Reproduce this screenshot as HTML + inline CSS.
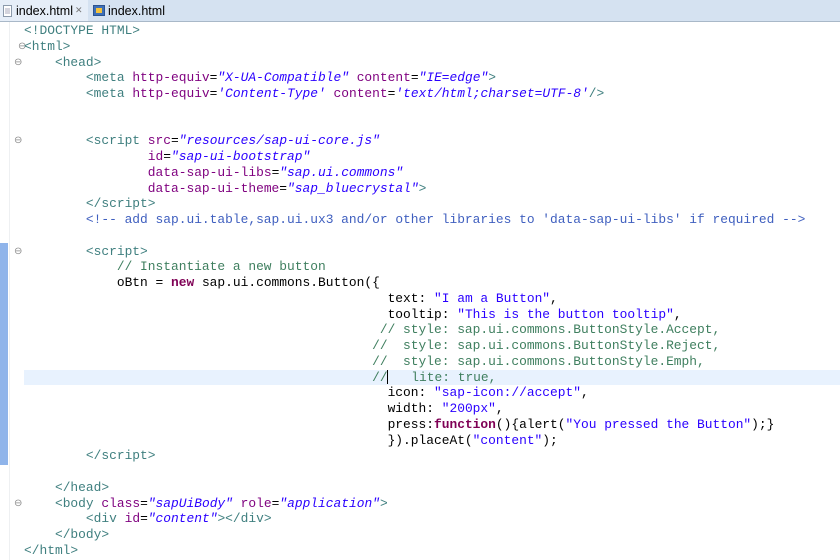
<!DOCTYPE html>
<html><head><style>
body{margin:0;width:840px;height:560px;background:#fff;position:relative;overflow:hidden;font-family:"Liberation Mono",monospace;}
.tabs{position:absolute;left:0;top:0;width:840px;height:21px;background:#d5e2f1;border-bottom:1px solid #a9b8c8;font-family:"Liberation Sans",sans-serif;font-size:12.5px;color:#000;}
.tab1{position:absolute;left:0;top:0;height:21px;width:88px;background:#e6eef8;}
.t{position:absolute;top:4px;}
.gut{position:absolute;left:9px;top:22px;width:1px;height:538px;background:#eef0f2;}
.bar{position:absolute;left:0;top:243px;width:8px;height:222px;background:#8fb4ea;}
.hl{position:absolute;left:24px;top:369.5px;width:816px;height:15.75px;background:#e8f2fe;}
.l{position:absolute;left:24px;height:15.75px;line-height:15.75px;font-size:12.9px;white-space:pre;color:#000;}
.f{position:absolute;left:14px;font-size:10px;color:#8a8a8a;line-height:15.75px;font-family:"DejaVu Sans",sans-serif;}
.g{color:#3f7f7f}.a{color:#7f007f}.v{color:#2a00ff;font-style:italic}.c{color:#3f5fbf}.jc{color:#3f7f5f}.k{color:#7f0055;font-weight:bold}.s{color:#2a00ff}
.cur{display:inline-block;width:1.5px;height:14px;background:#000;vertical-align:middle;margin-left:-1px}
</style></head><body>
<div class="tabs"><div class="tab1"></div>
<svg style="position:absolute;left:3px;top:5px" width="10" height="12"><rect x="0.5" y="0.5" width="8" height="11" fill="#fff" stroke="#8c9aab"/><line x1="2" y1="4" x2="7" y2="4" stroke="#aab"/><line x1="2" y1="6" x2="7" y2="6" stroke="#aab"/><line x1="2" y1="8" x2="7" y2="8" stroke="#aab"/></svg>
<span class="t" style="left:16px">index.html</span><span class="t" style="left:75px;font-size:9px;top:5px;color:#777">✕</span>
<svg style="position:absolute;left:93px;top:5px" width="12" height="11"><rect x="0.5" y="0.5" width="11" height="10" fill="#3d6fb8" stroke="#2c5490"/><rect x="3" y="3" width="6" height="5" fill="#f3c23c"/></svg>
<span class="t" style="left:108px">index.html</span></div>
<div class="gut"></div><div class="bar"></div><div class="hl"></div>
<div class="f" style="top:39px;left:18px">⊖</div>
<div class="f" style="top:55px">⊖</div>
<div class="f" style="top:133px">⊖</div>
<div class="f" style="top:244px">⊖</div>
<div class="f" style="top:496px">⊖</div>
<div class="l" style="top:23px"><span class="g">&lt;!DOCTYPE HTML&gt;</span></div>
<div class="l" style="top:38.75px"><span class="g">&lt;html&gt;</span></div>
<div class="l" style="top:54.5px">    <span class="g">&lt;head&gt;</span></div>
<div class="l" style="top:70.25px">        <span class="g">&lt;meta </span><span class="a">http-equiv</span>=<span class="v">"X-UA-Compatible"</span> <span class="a">content</span>=<span class="v">"IE=edge"</span><span class="g">&gt;</span></div>
<div class="l" style="top:86px">        <span class="g">&lt;meta </span><span class="a">http-equiv</span>=<span class="v">'Content-Type'</span> <span class="a">content</span>=<span class="v">'text/html;charset=UTF-8'</span><span class="g">/&gt;</span></div>
<div class="l" style="top:133.25px">        <span class="g">&lt;script </span><span class="a">src</span>=<span class="v">"resources/sap-ui-core.js"</span></div>
<div class="l" style="top:149px">                <span class="a">id</span>=<span class="v">"sap-ui-bootstrap"</span></div>
<div class="l" style="top:164.75px">                <span class="a">data-sap-ui-libs</span>=<span class="v">"sap.ui.commons"</span></div>
<div class="l" style="top:180.5px">                <span class="a">data-sap-ui-theme</span>=<span class="v">"sap_bluecrystal"</span><span class="g">&gt;</span></div>
<div class="l" style="top:196.25px">        <span class="g">&lt;/script&gt;</span></div>
<div class="l" style="top:212px">        <span class="c">&lt;!-- add sap.ui.table,sap.ui.ux3 and/or other libraries to 'data-sap-ui-libs' if required --&gt;</span></div>
<div class="l" style="top:243.5px">        <span class="g">&lt;script&gt;</span></div>
<div class="l" style="top:259.25px">            <span class="jc">// Instantiate a new button</span></div>
<div class="l" style="top:275px">            oBtn = <span class="k">new</span> sap.ui.commons.Button({</div>
<div class="l" style="top:290.75px">                                               text: <span class="s">"I am a Button"</span>,</div>
<div class="l" style="top:306.5px">                                               tooltip: <span class="s">"This is the button tooltip"</span>,</div>
<div class="l" style="top:322.25px">                                              <span class="jc">// style: sap.ui.commons.ButtonStyle.Accept,</span></div>
<div class="l" style="top:338px">                                             <span class="jc">//  style: sap.ui.commons.ButtonStyle.Reject,</span></div>
<div class="l" style="top:353.75px">                                             <span class="jc">//  style: sap.ui.commons.ButtonStyle.Emph,</span></div>
<div class="l" style="top:369.5px">                                             <span class="jc">//<span class="cur"></span>   lite: true,</span></div>
<div class="l" style="top:385.25px">                                               icon: <span class="s">"sap-icon://accept"</span>,</div>
<div class="l" style="top:401px">                                               width: <span class="s">"200px"</span>,</div>
<div class="l" style="top:416.75px">                                               press:<span class="k">function</span>(){alert(<span class="s">"You pressed the Button"</span>);}</div>
<div class="l" style="top:432.5px">                                               }).placeAt(<span class="s">"content"</span>);</div>
<div class="l" style="top:448.25px">        <span class="g">&lt;/script&gt;</span></div>
<div class="l" style="top:479.75px">    <span class="g">&lt;/head&gt;</span></div>
<div class="l" style="top:495.5px">    <span class="g">&lt;body </span><span class="a">class</span>=<span class="v">"sapUiBody"</span> <span class="a">role</span>=<span class="v">"application"</span><span class="g">&gt;</span></div>
<div class="l" style="top:511.25px">        <span class="g">&lt;div </span><span class="a">id</span>=<span class="v">"content"</span><span class="g">&gt;&lt;/div&gt;</span></div>
<div class="l" style="top:527px">    <span class="g">&lt;/body&gt;</span></div>
<div class="l" style="top:542.75px"><span class="g">&lt;/html&gt;</span></div>
</body></html>
